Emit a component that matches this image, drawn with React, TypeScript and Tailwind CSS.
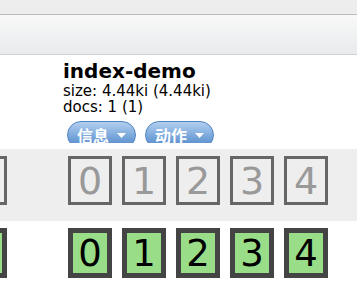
const shards = [0, 1, 2, 3, 4];

function Caret() {
  return (
    <svg width="9" height="5" viewBox="0 0 9 5" className="shrink-0">
      <polygon points="0,0 9,0 4.5,5" fill="#ffffff" />
    </svg>
  );
}

function MenuButton({ label }: { label: string }) {
  return (
    <div className="flex h-[28px] items-center gap-[8px] rounded-full border border-[#4f82c0] bg-gradient-to-b from-[#b3d0ef] via-[#7fabdd] to-[#4f86c6] pl-[9px] pr-[9px] text-[16px] font-bold leading-none text-white font-['Noto_Sans_CJK_SC',sans-serif]">
      <span>{label}</span>
      <Caret />
    </div>
  );
}

function GhostBox({ n, className = "" }: { n?: number; className?: string }) {
  return (
    <div
      className={
        "flex h-[49px] w-[44px] shrink-0 items-center justify-center border-[3px] border-[#666666] text-[38px] leading-none text-[#999999] " +
        className
      }
    >
      {n}
    </div>
  );
}

function ShardBox({ n, className = "" }: { n?: number; className?: string }) {
  return (
    <div
      className={
        "flex h-[50px] w-[44px] shrink-0 items-center justify-center border-[5px] border-[#444444] bg-[#99dd88] text-[37px] leading-none text-black " +
        className
      }
    >
      {n}
    </div>
  );
}

export default function App() {
  return (
    <div className="h-[298px] w-[357px] overflow-hidden bg-white font-['DejaVu_Sans',sans-serif]">
      <div className="h-[15px] border-b border-[#bbbbbb] bg-[#ededed]" />
      <div className="h-[40px] border-b border-[#cfd3d6] bg-gradient-to-b from-[#f8f9f8] to-[#e8eaec]" />

      {/* index header, buttons are clipped by the fixed-height cell */}
      <div className="flex h-[94px]">
        <div className="w-[63px] shrink-0" />
        <div className="h-[88px] overflow-hidden pt-[5px]">
          <div className="text-[20px] font-bold leading-[23px] text-black">index-demo</div>
          <div className="text-[15px] leading-[16px] text-black">size: 4.44ki (4.44ki)</div>
          <div className="text-[15px] leading-[16px] text-black">docs: 1 (1)</div>
          <div className="mt-[6px] flex gap-[9px] pl-[4px]">
            <MenuButton label="信息" />
            <MenuButton label="动作" />
          </div>
        </div>
      </div>

      <div className="flex h-[72px] items-start bg-[#eeeeee] pt-[7px]">
        <GhostBox className="ml-[-37px]" />
        <div className="ml-[61px] flex gap-[10px]">
          {shards.map((n) => (
            <GhostBox key={n} n={n} />
          ))}
        </div>
      </div>

      <div className="flex items-start pt-[7px]">
        <ShardBox className="ml-[-37px]" />
        <div className="ml-[61px] flex gap-[10px]">
          {shards.map((n) => (
            <ShardBox key={n} n={n} />
          ))}
        </div>
      </div>
    </div>
  );
}
